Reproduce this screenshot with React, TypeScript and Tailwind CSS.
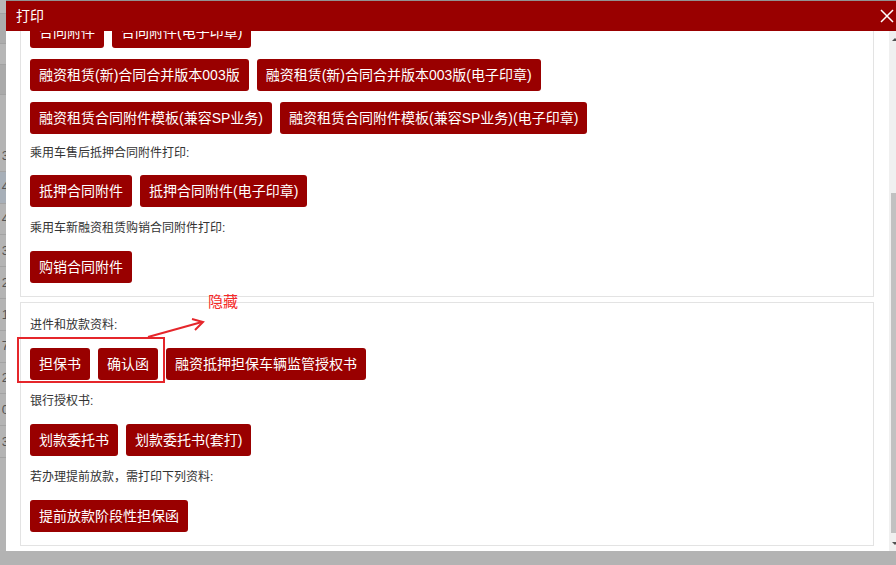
import React from "react";

const font = { fontFamily: '"Liberation Sans", "Noto Sans CJK SC", sans-serif' };

const Btn = ({ text }: { text: string }) => (
  <button className="h-8 px-[9px] rounded-[3px] bg-[#990000] text-white text-[14px] leading-8 whitespace-nowrap">
    {text}
  </button>
);

const Row = ({ items }: { items: string[] }) => (
  <div className="flex gap-2">
    {items.map((t) => (
      <Btn key={t} text={t} />
    ))}
  </div>
);

const Label = ({ text, cls }: { text: string; cls: string }) => (
  <div className={"h-5 leading-5 text-[12px] text-[#333] " + cls}>{text}</div>
);

// rows of the table behind the overlay, only a sliver of it shows
const tableRows = ["3", "4", "4", "3", "2", "1", "7", "2", "0", "3"];

const App = () => {
  return (
    <div className="relative w-[896px] h-[565px] overflow-hidden bg-[#b3b3b3] flex flex-col" style={font}>
      <div className="flex h-[551px]">
        {/* page behind */}
        <div className="w-[6px] flex flex-col overflow-hidden bg-[#b4b4b4]">
          <div className="h-[13px] shrink-0 bg-[#b8b8b8]" />
          <div className="h-[31px] shrink-0 bg-[#acacac] border-y border-[#a2a2a2]" />
          <div className="h-[20px] shrink-0 bg-[#b6b6b6]" />
          <div className="h-[31px] shrink-0 bg-[#aaaaaa] border-y border-[#a2a2a2]" />
          <div className="h-[45px] shrink-0 bg-[#b4b4b4]" />
          {tableRows.map((d, i) => (
            <div
              key={i}
              className={
                "h-[31.8px] shrink-0 flex items-center justify-end border-b border-[#a3a3a3] text-[13px] text-[#555] " +
                (i === 1 ? "bg-[#a7afb8]" : "")
              }
            >
              <span className="-mr-[3px]">{d}</span>
            </div>
          ))}
        </div>

        {/* dialog */}
        <div className="flex-1 flex flex-col bg-white border-t border-[#929292]">
          <div className="h-[30px] shrink-0 bg-[#990000] flex items-center justify-between pl-[10px] pr-[2px]">
            <span className="text-white text-[14px]">打印</span>
            <svg width="14" height="14" viewBox="0 0 14 14">
              <path d="M1 1L13 13M13 1L1 13" stroke="#fff" strokeWidth="1.5" />
            </svg>
          </div>
          <div className="flex-1 flex overflow-hidden">
            <div className="flex-1 overflow-hidden pl-[14px] pr-[15px]">
              {/* scrolled position */}
              <div className="-mt-[61px]">
                <div className="border border-[#e3e3e3] px-[9px] pt-3 pb-[13px] mb-[5px]">
                  <Label text="融资租赁合同附件打印:" cls="mb-[13px]" />
                  <div className="flex flex-col gap-[11px]">
                    <Row items={["合同附件", "合同附件(电子印章)"]} />
                    <Row items={["融资租赁(新)合同合并版本003版", "融资租赁(新)合同合并版本003版(电子印章)"]} />
                    <Row items={["融资租赁合同附件模板(兼容SP业务)", "融资租赁合同附件模板(兼容SP业务)(电子印章)"]} />
                  </div>
                  <Label text="乘用车售后抵押合同附件打印:" cls="mt-[9px] mb-3" />
                  <Row items={["抵押合同附件", "抵押合同附件(电子印章)"]} />
                  <Label text="乘用车新融资租赁购销合同附件打印:" cls="mt-[11px] mb-[13px]" />
                  <Row items={["购销合同附件"]} />
                </div>
                <div className="border border-[#e3e3e3] px-[9px] pt-3 pb-[13px]">
                  <Label text="进件和放款资料:" cls="mb-[13px]" />
                  <Row items={["担保书", "确认函", "融资抵押担保车辆监管授权书"]} />
                  <Label text="银行授权书:" cls="mt-[11px] mb-[13px]" />
                  <Row items={["划款委托书", "划款委托书(套打)"]} />
                  <Label text="若办理提前放款，需打印下列资料:" cls="mt-[11px] mb-[13px]" />
                  <Row items={["提前放款阶段性担保函"]} />
                </div>
              </div>
            </div>
            {/* scrollbar */}
            <div className="w-[7px] flex flex-col bg-[#f0f0f0]">
              <div className="h-[17px] flex items-center justify-end">
                <svg width="4" height="4" viewBox="0 0 4 4">
                  <path d="M0 3L3 0L4 1V3Z" fill="#505050" />
                </svg>
              </div>
              <div className="flex-1">
                <div className="mt-[145px] ml-[2px] h-[340px] bg-[#c1c1c1]" />
              </div>
              <div className="h-[17px] flex items-center justify-end">
                <svg width="4" height="4" viewBox="0 0 4 4">
                  <path d="M0 1L3 4L4 3V1Z" fill="#505050" />
                </svg>
              </div>
            </div>
          </div>
        </div>
      </div>

      {/* annotation drawn over the dialog */}
      <div className="absolute left-[17px] top-[337px] w-[148px] h-[46px] border-2 border-[#e5262b]" />
      <svg className="absolute left-[140px] top-[312px]" width="70" height="30" viewBox="0 0 70 30">
        <path d="M8 25L62 10" stroke="#e5262b" strokeWidth="2" />
        <path d="M52 7L63 10L55 18" stroke="#e5262b" strokeWidth="2" fill="none" />
      </svg>
      <span className="absolute left-[208px] top-[294px] text-[15px] leading-[15px] text-[#f52a2a]">隐藏</span>
    </div>
  );
};

export default App;
